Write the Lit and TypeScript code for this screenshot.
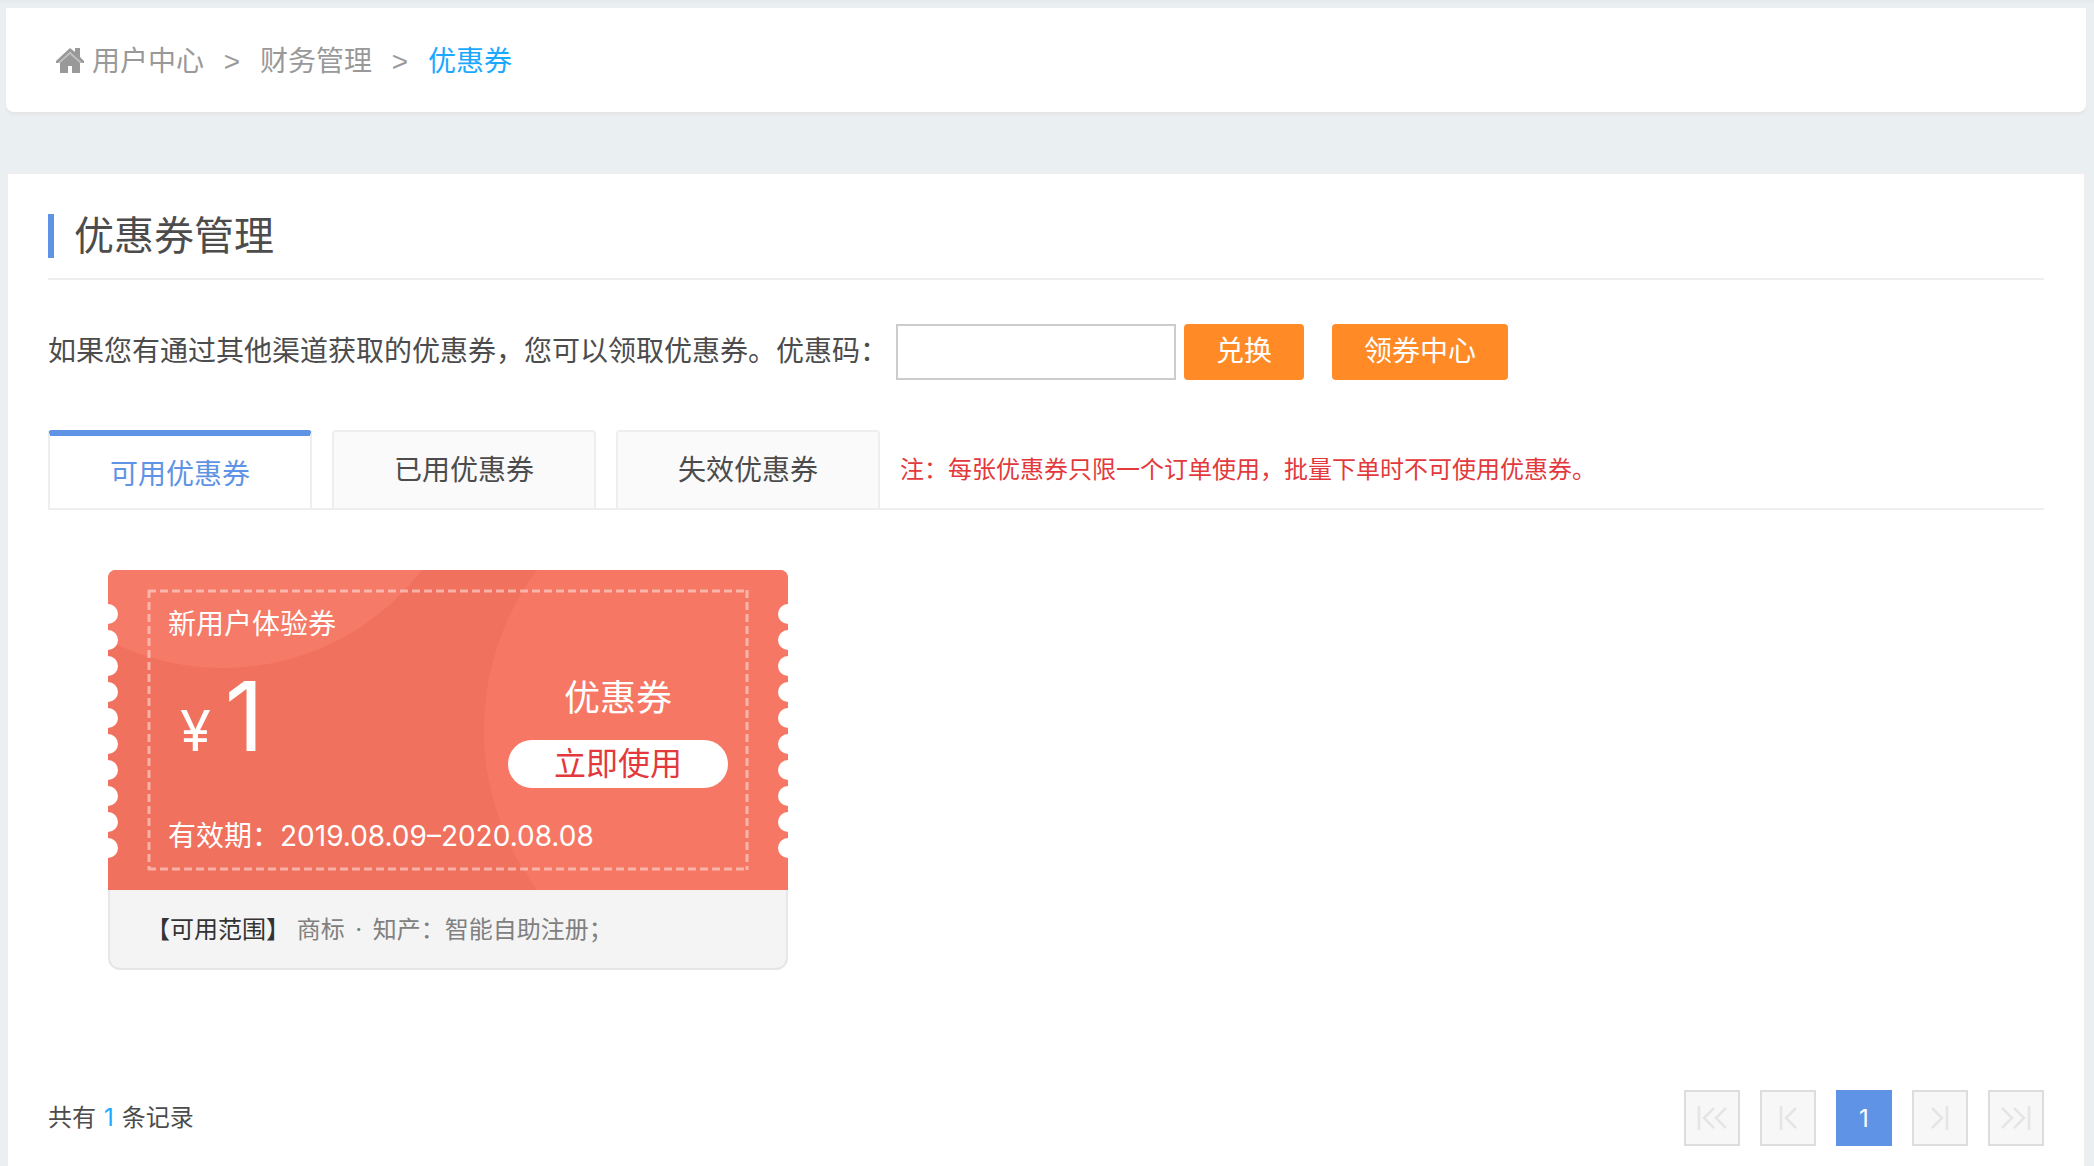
import { LitElement, html, css, svg } from "lit";
import { customElement, state } from "lit/decorators.js";

const NOTCHES = Array.from({ length: 10 }, (_, i) => 44 + i * 26);

@customElement("coupon-card")
class CouponCard extends LitElement {
  static styles = css`
    :host { display: block; width: 680px; }
    .ticket { position: relative; display: grid; grid-template-columns: 1fr 220px; align-content: start; height: 320px; box-sizing: border-box; padding: 20px 60px; color: #fff; }
    .art { position: absolute; inset: 0; width: 100%; height: 100%; }
    .left, .right, .date { position: relative; }
    .left { padding-top: 14px; }
    .name, .date { font-size: 28px; line-height: 40px; margin: 0; font-weight: 400; }
    .price { display: flex; align-items: baseline; gap: 14px; padding: 16px 0 0 12px; margin: 0; line-height: 112px; height: 112px; font-size: 96px; }
    .yen { font-size: 56px; }
    .date { grid-column: 1 / -1; margin-top: 28px; }
    .right { display: flex; flex-direction: column; align-items: center; padding-top: 80px; }
    .kind { margin: 0; font-size: 36px; line-height: 56px; }
    .use { margin-top: 14px; width: 220px; height: 48px; padding: 0; border: 0; border-radius: 24px; background: #fff; color: #e4393c; font: inherit; font-size: 32px; line-height: 48px; cursor: pointer; }
    .scope { margin: 0; padding: 20px 36px 18px; border: 2px solid #e6e6e6; border-top: 0; border-radius: 0 0 12px 12px; background: #f4f4f4; font-size: 24px; line-height: 40px; color: #808080; }
    .scope b { font-weight: 400; color: #333; }
    .dot { display: inline-block; width: 28px; text-align: center; }
  `;
  render() {
    return html`
      <section class="ticket">
        <svg class="art" viewBox="0 0 680 320" aria-hidden="true">
          <defs><clipPath id="face"><path d="M8 0H672A8 8 0 0 1 680 8V320H0V8A8 8 0 0 1 8 0Z" /></clipPath></defs>
          <g clip-path="url(#face)">
            <rect width="680" height="320" fill="#f0715e" />
            <circle cx="115" cy="-153" r="251" fill="#f67a68" />
            <circle cx="644" cy="160" r="268" fill="#f67864" />
            ${NOTCHES.map((y) => svg`<circle cx="0" cy=${y} r="10" fill="#fff" /><circle cx="680" cy=${y} r="10" fill="#fff" />`)}
            <path d="M40 21H640M41 20V300M639 20V300M40 299H640" fill="none" stroke="#fff" stroke-opacity=".45" stroke-width="3" stroke-dasharray="8 4" />
          </g>
        </svg>
        <div class="left">
          <h2 class="name">新用户体验券</h2>
          <p class="price"><span class="yen">¥</span><span>1</span></p>
        </div>
        <div class="right">
          <p class="kind">优惠券</p>
          <button class="use" type="button">立即使用</button>
        </div>
        <p class="date">有效期：2019.08.09–2020.08.08</p>
      </section>
      <p class="scope"><b>【可用范围】</b> 商标<span class="dot">·</span>知产：智能自助注册；</p>
    `;
  }
}

@customElement("app-root")
class AppRoot extends LitElement {
  @state() private tab = 0;
  static styles = css`
    :host { display: block; box-sizing: border-box; min-height: 100vh; padding: 8px 8px 0 6px; background: linear-gradient(#e4e9eb, #eaeff2 4px); font-family: Inter, "Noto Sans CJK SC", sans-serif; font-size: 28px; line-height: 40px; color: #4c4c4c; }
    .crumbs { display: flex; align-items: center; height: 104px; padding: 2px 50px 0; box-sizing: border-box; background: #fff; border-radius: 0 0 8px 8px; box-shadow: 0 3px 2px #e6e6e6; color: #999; }
    .crumbs a { color: inherit; text-decoration: none; display: flex; align-items: center; gap: 8px; }
    .crumbs .sep { width: 56px; padding-top: 2px; text-align: center; font-family: "Liberation Sans", sans-serif; }
    .crumbs .here { color: #1ba9ff; }
    .panel { margin-top: 60px; padding: 40px 40px 20px; border: 2px solid #eee; border-bottom: 0; background: #fff; }
    .head { display: flex; align-items: center; padding-bottom: 20px; border-bottom: 2px solid #eee; }
    .head h1 { margin: 0; padding-left: 20px; border-left: 6px solid #5e93e5; font-size: 40px; line-height: 44px; font-weight: 400; }
    .redeem { display: flex; align-items: center; margin-top: 44px; height: 56px; }
    .redeem label { margin-right: 8px; padding-bottom: 2px; }
    .redeem input { box-sizing: border-box; width: 280px; height: 56px; padding: 0 12px; border: 2px solid #ccc; background: #fff; font: inherit; color: inherit; }
    .btn { height: 56px; padding: 0 32px 2px; border: 0; border-radius: 4px; background: #ff8a26; color: #fff; font: inherit; cursor: pointer; }
    .exchange { margin: 0 28px 0 8px; }
    .tabs { display: flex; align-items: stretch; gap: 20px; height: 78px; margin-top: 50px; border-bottom: 2px solid #eee; }
    .tab { box-sizing: border-box; width: 264px; padding: 0; border: 2px solid #eee; border-bottom: 0; border-radius: 4px 4px 0 0; background: #fafafa; color: #4c4c4c; font: inherit; cursor: pointer; }
    .tab.on { padding-top: 4px; border-top: 6px solid #5e93e5; background: #fff; color: #5e93e5; }
    .note { margin: 0; padding-top: 2px; align-self: center; font-size: 24px; color: #e4393c; }
    .list { padding: 60px; }
    .foot { display: flex; align-items: center; justify-content: space-between; margin-top: 60px; font-size: 24px; }
    .foot p { display: flex; gap: 8px; margin: 0; }
    .count { color: #1ba9ff; }
    .pages { display: flex; gap: 20px; }
    .page { display: flex; align-items: center; justify-content: center; box-sizing: border-box; width: 56px; height: 56px; padding: 0; border: 2px solid #ddd; background: #f7f7f7; color: #e5e5e5; font: inherit; }
    .page.now { padding-top: 2px; border-color: #5e93e5; background: #5e93e5; color: #fff; }
  `;
  private arrow(label: string, d: string) {
    return html`<button class="page" type="button" disabled aria-label=${label}>
      <svg width="32" height="28" viewBox="0 0 32 28" fill="none" stroke="currentColor" stroke-width="2.6" aria-hidden="true"><path d=${d} /></svg>
    </button>`;
  }
  render() {
    const tabs = ["可用优惠券", "已用优惠券", "失效优惠券"];
    return html`
      <nav class="crumbs">
        <a href="#home">
          <svg width="28" height="26" viewBox="0 0 28 26" aria-hidden="true">
            <path fill="#999" d="M14 0L19 4V0H24V9L28 13V15H26L14 4L2 15H0V13Z" />
            <path fill="#bbb" d="M14 4L26 15H24L14 6L4 15H2Z" />
            <path fill="#999" d="M14 6L24 15V25H16V18H12V25H4V15Z" />
          </svg>
          <span>用户中心</span>
        </a>
        <span class="sep">&gt;</span>
        <a href="#finance">财务管理</a>
        <span class="sep">&gt;</span>
        <span class="here">优惠券</span>
      </nav>
      <main class="panel">
        <header class="head"><h1>优惠券管理</h1></header>
        <form class="redeem" @submit=${(e: Event) => e.preventDefault()}>
          <label for="code">如果您有通过其他渠道获取的优惠券，您可以领取优惠券。优惠码：</label>
          <input id="code" type="text" />
          <button class="btn exchange" type="submit">兑换</button>
          <button class="btn" type="button">领券中心</button>
        </form>
        <div class="tabs">
          ${tabs.map((t, i) => html`<button class="tab ${this.tab === i ? "on" : ""}" type="button" @click=${() => (this.tab = i)}>${t}</button>`)}
          <p class="note">注：每张优惠券只限一个订单使用，批量下单时不可使用优惠券。</p>
        </div>
        <div class="list"><coupon-card></coupon-card></div>
        <footer class="foot">
          <p><span>共有</span><span class="count">1</span><span>条记录</span></p>
          <nav class="pages">
            ${this.arrow("首页", "M3 2V26M18 4L8 14L18 24M30 4L20 14L30 24")}
            ${this.arrow("上一页", "M9 2V26M24 4L14 14L24 24")}
            <button class="page now" type="button">1</button>
            ${this.arrow("下一页", "M8 4L18 14L8 24M23 2V26")}
            ${this.arrow("末页", "M2 4L12 14L2 24M14 4L24 14L14 24M29 2V26")}
          </nav>
        </footer>
      </main>
    `;
  }
}
